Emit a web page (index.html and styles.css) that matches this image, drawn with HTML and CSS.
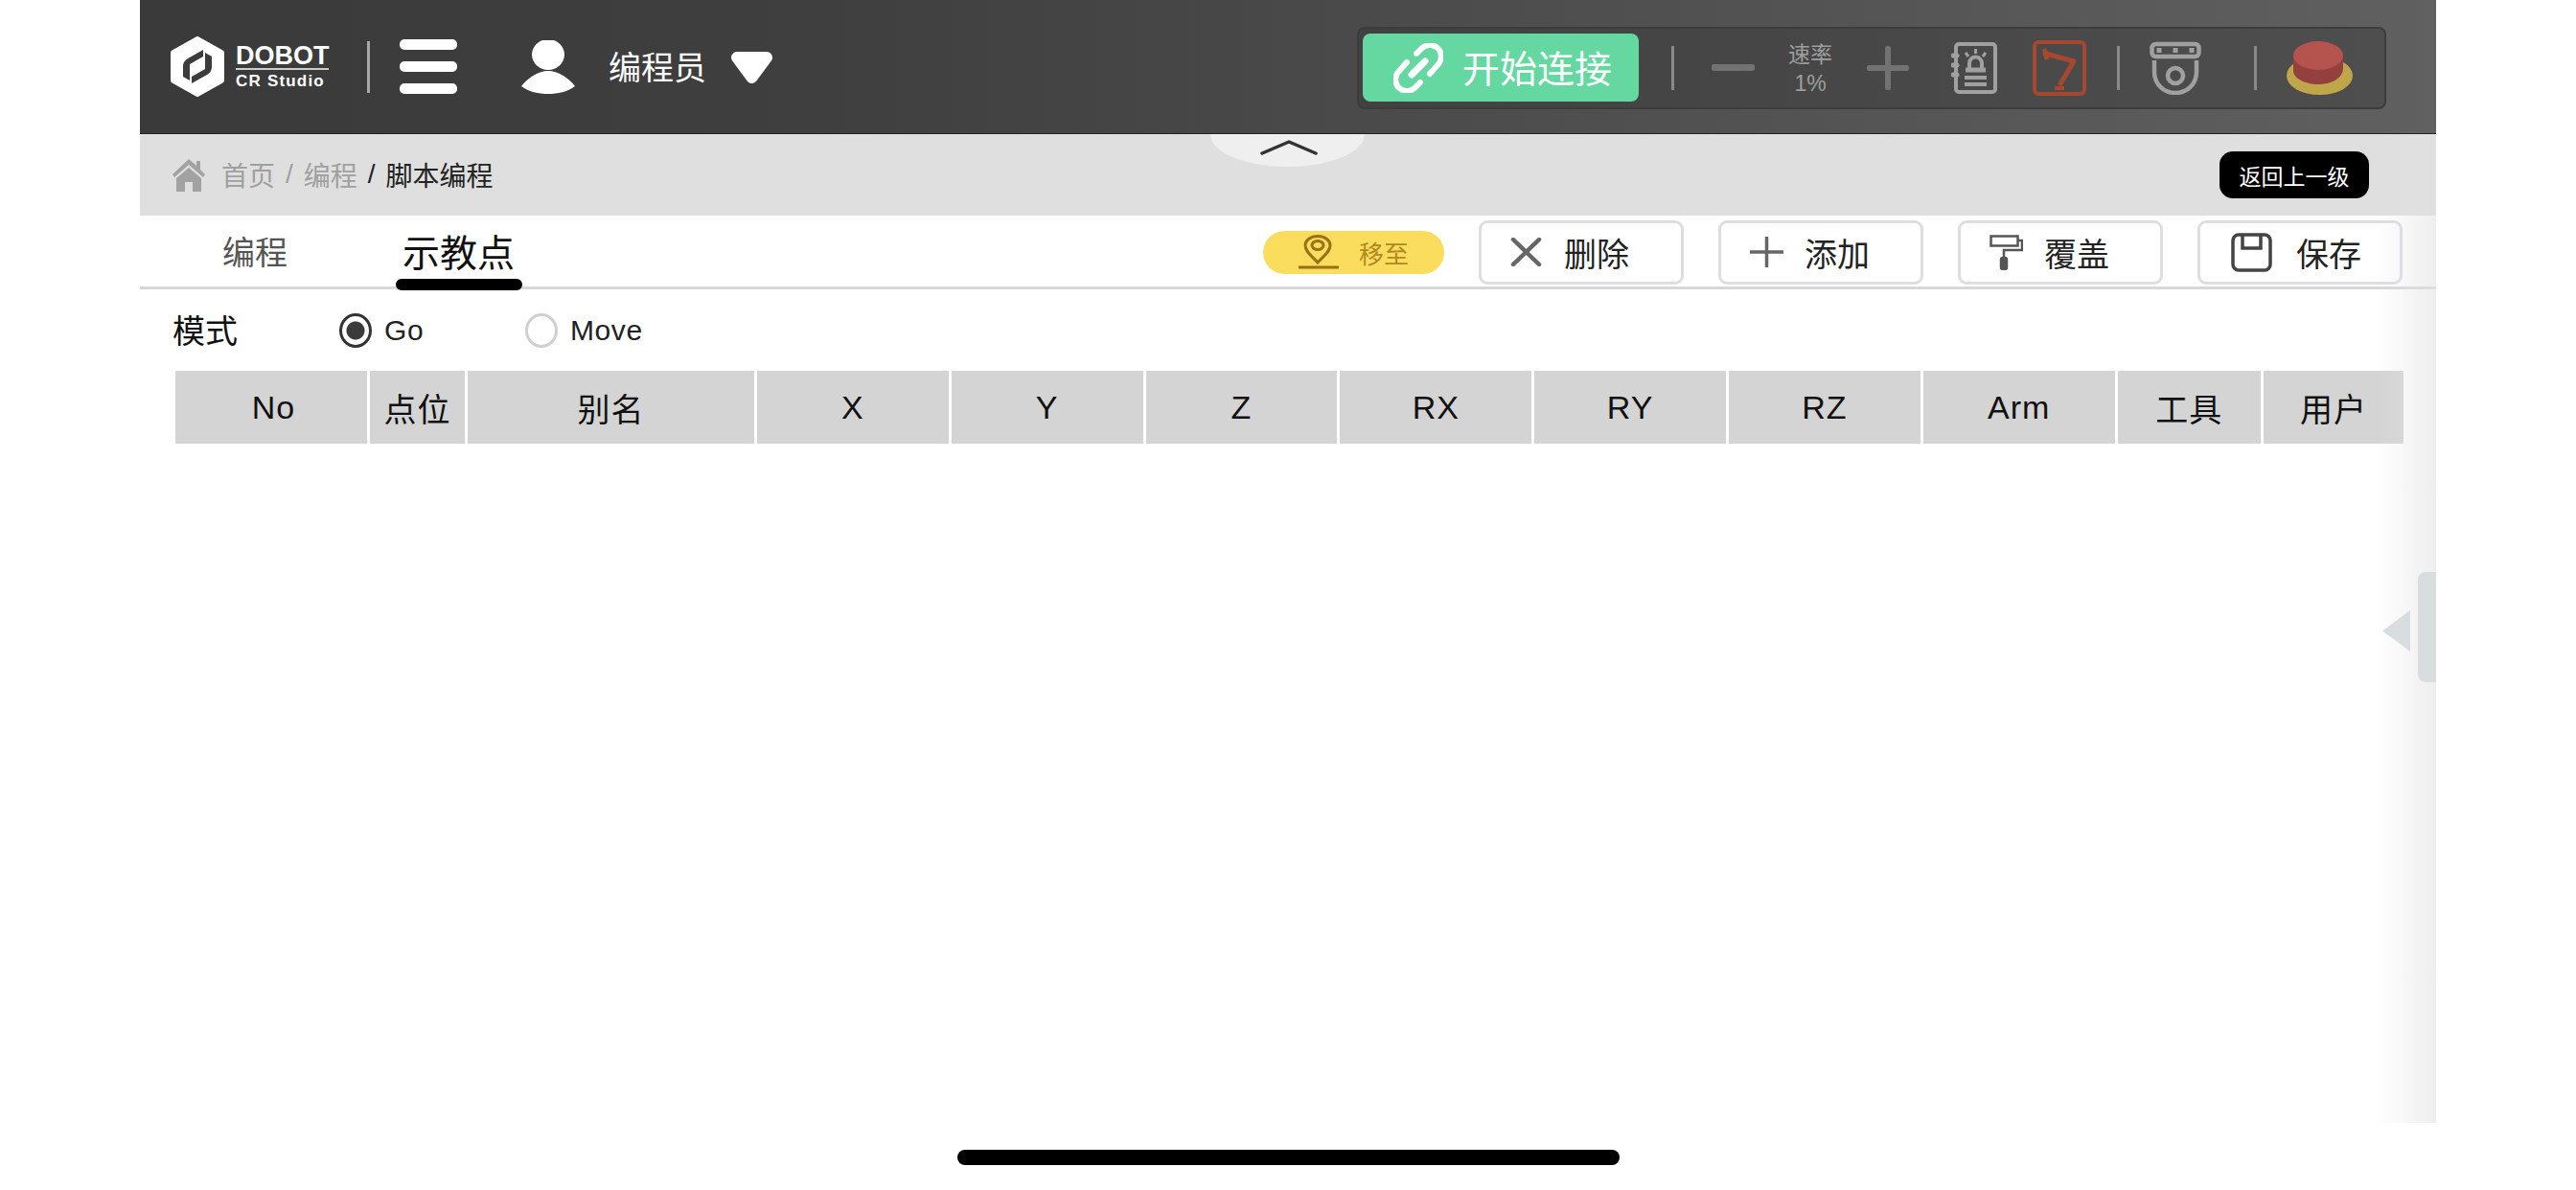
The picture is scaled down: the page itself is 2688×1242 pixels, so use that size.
FILE: index.html
```html
<!DOCTYPE html>
<html lang="zh-CN">
<head>
  <meta charset="UTF-8" />
  <title>CR Studio - 脚本编程</title>
  <link rel="stylesheet" href="styles.css">
</head>
<body>

  <div class="app">
    <!-- Top bar -->
    <header class="topbar">
      <svg class="logo" viewBox="0 0 58 63">
        <path d="M29 3 L54 17 V46 L29 60 L4 46 V17 Z" fill="#fff" stroke="#fff" stroke-width="6" stroke-linejoin="round"/>
        <path d="M35 14 L19 23 Q14 26 14 31 V42 L21 46 V29 L35 21 Z" fill="#3c3c3c"/>
        <path d="M23 49 L39 40 Q44 37 44 32 V21 L37 17 V34 L23 42 Z" fill="#3c3c3c"/>
      </svg>
      <div class="logo-text">
        <span class="logo-name">DOBOT</span>
        <span class="logo-sub">CR Studio</span>
      </div>
      <span class="top-divider"></span>
      <div class="hamburger"><span></span><span></span><span></span></div>
      <svg class="user-icon" viewBox="0 0 56 56">
        <ellipse cx="28" cy="15" rx="17" ry="16" fill="#fff"/>
        <path d="M28 32 C17 32 6 40 0 48 C8 54 18 56 28 56 C38 56 48 54 56 48 C50 40 39 32 28 32 Z" fill="#fff"/>
      </svg>
      <span class="user-name">编程员</span>
      <svg class="user-caret" viewBox="0 0 47 36">
        <path d="M8 8 H39 L23.500 29 Z" fill="#fff" stroke="#fff" stroke-width="12" stroke-linejoin="round"/>
      </svg>

      <div class="toolbar">
        <button class="connect-btn">
          <svg class="link-icon" viewBox="0 0 52 52" fill="none" stroke="#fff" stroke-linecap="round">
            <path d="M24 11 L30 5 C36 0 43 2 47 6 C51 11 51 18 46 23 L38 32" stroke-width="6"/>
            <path d="M28 41 L22 47 C16 52 9 50 5 46 C1 41 1 34 6 29 L14 20" stroke-width="6"/>
            <path d="M19 33 L33 19" stroke-width="7"/>
          </svg>
          <span>开始连接</span>
        </button>
        <span class="bar-divider first"></span>
        <span class="speed-minus"></span>
        <div class="speed">
          <span>速率</span>
          <span>1%</span>
        </div>
        <span class="speed-plus"></span>
        <svg class="alarm-icon" viewBox="0 0 48 54" fill="none" stroke="#a0a0a0">
          <rect x="5" y="2" width="41" height="50" rx="3" stroke-width="4"/>
          <path d="M2 14 H6 M2 24 H6 M2 34 H6" stroke-width="5" stroke-linecap="round"/>
          <path d="M19 27 V22 A6.500 6.500 0 0 1 32 22 V27" stroke-width="4"/>
          <path d="M15 29 H36" stroke-width="5"/>
          <path d="M25.500 7 V12 M15 11 L18 15 M36 11 L33 15" stroke-width="3"/>
          <path d="M14 37 H37 M14 44 H37" stroke-width="4"/>
        </svg>
        <svg class="robot-icon" viewBox="0 0 56 58" fill="none" stroke="#a6472f">
          <rect x="2" y="2" width="52" height="54" rx="4" stroke-width="4"/>
          <path d="M12 9 L15 20 M14 14 L43 22 L28 47" stroke-width="5" stroke-linejoin="round"/>
          <path d="M23 50 H33" stroke-width="4"/>
        </svg>
        <span class="bar-divider second"></span>
        <svg class="camera-icon" viewBox="0 0 54 56" fill="none" stroke="#a0a0a0">
          <rect x="2.500" y="3" width="49" height="13" rx="4" stroke-width="4.500"/>
          <path d="M10 7 V12 M27 7 V12 M44 7 V12" stroke-width="5"/>
          <path d="M5 20 V32 C5 45 15 54 27 54 C39 54 49 45 49 32 V20" stroke-width="4.500"/>
          <circle cx="27" cy="36" r="8" stroke-width="4.500"/>
        </svg>
        <span class="bar-divider third"></span>
        <svg class="stop-icon" viewBox="0 0 69 56">
          <ellipse cx="34.500" cy="36" rx="34.500" ry="20" fill="#bfa64a"/>
          <path d="M7 15 V31 C7 39 20 45 33 45 C46 45 59 39 59 28 V15 Z" fill="#93403f"/>
          <ellipse cx="33" cy="15" rx="26" ry="15" fill="#b5534f"/>
        </svg>
      </div>
    </header>

    <!-- Collapse tab hanging from the top bar -->
    <div class="collapse-tab">
      <svg viewBox="0 0 60 16" fill="none" stroke="#333" stroke-width="3.500" stroke-linecap="round" stroke-linejoin="round">
        <path d="M2 14 L30 2 L58 14"/>
      </svg>
    </div>

    <!-- Breadcrumb -->
    <nav class="breadcrumb">
      <svg class="home-icon" viewBox="0 0 34 34" fill="#a2a2a2">
        <path d="M17 0 L25 7 V2 H29 V11 L34 16 L32 19 L17 6 L2 19 L0 16 Z"/>
        <path d="M17 9 L30 20 V34 H21 V24 H13 V34 H4 V20 Z"/>
      </svg>
      <span class="crumb muted">首页</span>
      <span class="crumb-sep muted">/</span>
      <span class="crumb muted">编程</span>
      <span class="crumb-sep">/</span>
      <span class="crumb">脚本编程</span>
      <button class="back-btn">返回上一级</button>
    </nav>

    <!-- Tabs and actions -->
    <div class="tabs-row">
      <span class="tab">编程</span>
      <span class="tab active">示教点</span>

      <button class="move-btn">
        <svg viewBox="0 0 42 36" fill="none" stroke="#9a7115" stroke-width="3">
          <path d="M20 29 C14 22 7 18 7 11 A13 9.500 0 0 1 33 11 C33 18 26 22 20 29 Z"/>
          <ellipse cx="20" cy="11" rx="6" ry="4.500"/>
          <path d="M0 34 H42"/>
        </svg>
        移至
      </button>
      <button class="action-btn delete-btn">
        <svg viewBox="0 0 33 30" fill="none" stroke="#666" stroke-width="4.500" stroke-linecap="round"><path d="M3 2 L30 28 M30 2 L3 28"/></svg>
        删除
      </button>
      <button class="action-btn add-btn">
        <svg viewBox="0 0 35 32" fill="none" stroke="#666" stroke-width="3.500"><path d="M0 16 H35 M17.500 0 V32"/></svg>
        添加
      </button>
      <button class="action-btn cover-btn">
        <svg viewBox="0 0 35 37" fill="none" stroke="#555" stroke-width="2.500">
          <rect x="1.500" y="1.500" width="28" height="10"/>
          <path d="M30 6 H34 V16 H15 V24"/>
          <rect x="12" y="24" width="6" height="12" rx="2" fill="#555"/>
        </svg>
        覆盖
      </button>
      <button class="action-btn save-btn">
        <svg viewBox="0 0 43 41" fill="none" stroke="#444" stroke-width="3.500">
          <rect x="2" y="2" width="39" height="37" rx="6"/>
          <path d="M12 2 V16 H31 V2"/>
        </svg>
        保存
      </button>
    </div>

    <!-- Mode -->
    <div class="mode-row">
      <span class="mode-label">模式</span>
      <label class="radio checked"><span class="radio-dot"></span>Go</label>
      <label class="radio"><span class="radio-dot"></span>Move</label>
    </div>

    <!-- Point table header -->
    <div class="point-table">
      <div class="col first-col">No</div>
      <div class="col">点位</div>
      <div class="col">别名</div>
      <div class="col">X</div>
      <div class="col">Y</div>
      <div class="col">Z</div>
      <div class="col">RX</div>
      <div class="col">RY</div>
      <div class="col">RZ</div>
      <div class="col">Arm</div>
      <div class="col">工具</div>
      <div class="col">用户</div>
    </div>

    <div class="edge-shade"></div>
    <div class="side-handle">
      <span class="side-arrow"></span>
      <span class="side-bar"></span>
    </div>
  </div>

  <div class="home-bar"></div>

</body>
</html>
```

FILE: styles.css
```css
* {
  margin: 0;
  padding: 0;
  box-sizing: border-box;
  font-family: 'Liberation Sans', 'Noto Sans CJK SC', sans-serif;
}

body {
  background: #fff;
  overflow: hidden;
}

button {
  border: none;
  background: none;
}

.app {
  position: relative;
  width: 2396px;
  height: 1172px;
  margin-left: 146px;
  background: #fff;
  overflow: hidden;
}

/* Top bar */
.topbar {
  display: flex;
  align-items: center;
  height: 140px;
  padding: 0 52px 0 31px;
  background: linear-gradient(to right, #3a3a3a, #3f3f3f 30%, #4b4b4b 55%, #606060);
  border-bottom: 1px solid #222;
}

.logo {
  width: 58px;
  height: 63px;
}

.logo-text {
  display: flex;
  flex-direction: column;
  width: 97px;
  margin-left: 11px;
  padding-top: 3px;
  color: #fff;
  font-weight: 700;
}

.logo-name {
  font-size: 27px;
  line-height: 25px;
  border-bottom: 2px solid #ccc;
}

.logo-sub {
  font-size: 17px;
  line-height: 23px;
  letter-spacing: 1.2px;
}

.top-divider {
  width: 3px;
  height: 54px;
  margin-left: 40px;
  background: #a8a8a8;
}

.hamburger {
  display: flex;
  flex-direction: column;
  gap: 12px;
  width: 60px;
  margin-left: 31px;
}

.hamburger span {
  height: 11px;
  border-radius: 5px;
  background: #fff;
}

.user-icon {
  width: 56px;
  height: 56px;
  margin-left: 67px;
}

.user-name {
  margin-left: 35px;
  padding-bottom: 2px;
  color: #fff;
  font-size: 34px;
}

.user-caret {
  width: 47px;
  height: 36px;
  margin-left: 24px;
}

.toolbar {
  display: flex;
  align-items: center;
  width: 1074px;
  height: 86px;
  margin: 2px 0 0 auto;
  padding-left: 4px;
  border: 2px solid #3c3c3c;
  border-radius: 8px;
  background: linear-gradient(to right, #414141, #4e4e4e);
}

.connect-btn {
  display: flex;
  align-items: center;
  width: 288px;
  height: 71px;
  padding-left: 32px;
  border-radius: 8px;
  background: #65d8a2;
  color: #fff;
  font-size: 39px;
}

.connect-btn span {
  padding-bottom: 4px;
}

.link-icon {
  width: 52px;
  height: 52px;
  margin-right: 20px;
}

.bar-divider {
  width: 3px;
  height: 46px;
  background: #8a8a8a;
}

.bar-divider.first {
  margin-left: 34px;
}

.bar-divider.second {
  margin-left: 32px;
}

.bar-divider.third {
  margin-left: 55px;
}

.speed-minus {
  width: 45px;
  height: 7px;
  margin-left: 39px;
  border-radius: 2px;
  background: #727272;
}

.speed {
  display: flex;
  flex-direction: column;
  align-items: center;
  width: 60px;
  margin-left: 28px;
  padding-top: 2px;
  color: #9e9e9e;
  font-size: 23px;
  line-height: 30px;
}

.speed-plus {
  position: relative;
  width: 44px;
  height: 46px;
  margin-left: 29px;
}

.speed-plus::before,
.speed-plus::after {
  content: "";
  position: absolute;
  background: #727272;
  border-radius: 2px;
}

.speed-plus::before {
  left: 0;
  right: 0;
  top: 20px;
  height: 6px;
}

.speed-plus::after {
  top: 0;
  bottom: 0;
  left: 19px;
  width: 6px;
}

.alarm-icon {
  width: 48px;
  height: 54px;
  margin-left: 44px;
}

.robot-icon {
  width: 56px;
  height: 58px;
  margin-left: 37px;
}

.camera-icon {
  width: 54px;
  height: 56px;
  margin-left: 31px;
}

.stop-icon {
  width: 69px;
  height: 56px;
  margin-left: 31px;
}

/* Collapse tab */
.collapse-tab {
  position: absolute;
  top: 140px;
  left: 1117px;
  width: 161px;
  height: 34px;
  padding: 6px 0 0 3px;
  border-radius: 0 0 80px 80px / 0 0 34px 34px;
  background: #efefef;
  text-align: center;
}

.collapse-tab svg {
  width: 60px;
  height: 16px;
}

/* Breadcrumb */
.breadcrumb {
  display: flex;
  align-items: center;
  height: 85px;
  padding: 0 70px 0 34px;
  background: #dfdfdf;
  font-size: 28px;
  color: #222;
}

.crumb,
.crumb-sep {
  padding-bottom: 2px;
}

.home-icon {
  width: 34px;
  height: 34px;
  margin-right: 17px;
}

.crumb-sep {
  margin: 0 11px;
}

.muted {
  color: #a0a0a0;
}

.back-btn {
  width: 156px;
  height: 49px;
  margin-left: auto;
  border-radius: 14px;
  background: #000;
  color: #fff;
  font-size: 23px;
}

/* Tabs */
.tabs-row {
  display: flex;
  align-items: center;
  height: 77px;
  padding: 2px 35px 0 0;
  border-bottom: 3px solid #d6d6dc;
}

.tab {
  position: relative;
  font-size: 34px;
  color: #555;
  margin-left: 86px;
  padding-bottom: 4px;
}

.tab.active {
  margin-left: 120px;
  margin-right: auto;
  font-size: 39px;
  color: #111;
}

.tab.active::after {
  content: "";
  position: absolute;
  left: -7px;
  right: -8px;
  bottom: -10px;
  height: 12px;
  border-radius: 6px;
  background: #000;
}

.move-btn {
  display: flex;
  align-items: center;
  justify-content: center;
  gap: 21px;
  width: 189px;
  height: 45px;
  border-radius: 23px;
  background: #fbdd5e;
  color: #b08a22;
  font-size: 26px;
}

.move-btn svg {
  width: 42px;
  height: 36px;
}

.action-btn {
  display: flex;
  align-items: center;
  width: 214px;
  height: 67px;
  margin-left: 36px;
  border: 3px solid #dedee2;
  border-radius: 9px;
  background: #fff;
  color: #222;
  font-size: 34px;
}

.delete-btn svg {
  width: 33px;
  height: 30px;
  margin: 0 23px 0 30px;
}

.add-btn svg {
  width: 35px;
  height: 32px;
  margin: 0 22px 0 30px;
}

.cover-btn svg {
  width: 35px;
  height: 37px;
  margin: 0 22px 0 30px;
}

.save-btn svg {
  width: 43px;
  height: 41px;
  margin: 0 25px 0 32px;
}

/* Mode */
.mode-row {
  display: flex;
  align-items: center;
  height: 85px;
  padding-left: 34px;
  color: #222;
}

.mode-label {
  width: 174px;
  padding-bottom: 2px;
  font-size: 34px;
  color: #111;
}

.radio {
  display: flex;
  align-items: center;
  gap: 13px;
  width: 194px;
  font-size: 30px;
  letter-spacing: 0.6px;
}

.radio-dot {
  width: 34px;
  height: 36px;
  border: 3px solid #cfcfd4;
  border-radius: 50%;
  background: #fff;
}

.radio.checked .radio-dot {
  border-color: #333;
  background: radial-gradient(circle, #3a3a3a 0 9px, #fff 10px);
}

/* Table header */
.point-table {
  display: grid;
  grid-template-columns: 200px 99px 299px repeat(7, 199.8px) 149.5px 146px;
  gap: 3px;
  margin-left: 37px;
  width: 2325px;
}

.col {
  display: flex;
  align-items: center;
  justify-content: center;
  height: 76px;
  background: #d4d4d4;
  color: #111;
  font-size: 34px;
  letter-spacing: 1px;
}

.first-col {
  padding-left: 5px;
}

/* Right edge */
.edge-shade {
  position: absolute;
  top: 140px;
  right: 0;
  bottom: 0;
  width: 62px;
  background: linear-gradient(to right, rgba(225, 225, 228, 0), rgba(225, 225, 228, 0.55));
  pointer-events: none;
}

.side-handle {
  position: absolute;
  top: 597px;
  right: 0;
  display: flex;
  align-items: center;
  gap: 8px;
  height: 115px;
}

.side-arrow {
  width: 29px;
  height: 43px;
  margin-top: 8px;
  background: #d8dde0;
  clip-path: polygon(100% 0, 100% 100%, 0 50%);
}

.side-bar {
  width: 19px;
  height: 115px;
  border-radius: 8px 0 0 8px;
  background: #d8dde0;
}

.home-bar {
  width: 691px;
  height: 16px;
  margin: 28px auto 0;
  border-radius: 8px;
  background: #000;
}
```
